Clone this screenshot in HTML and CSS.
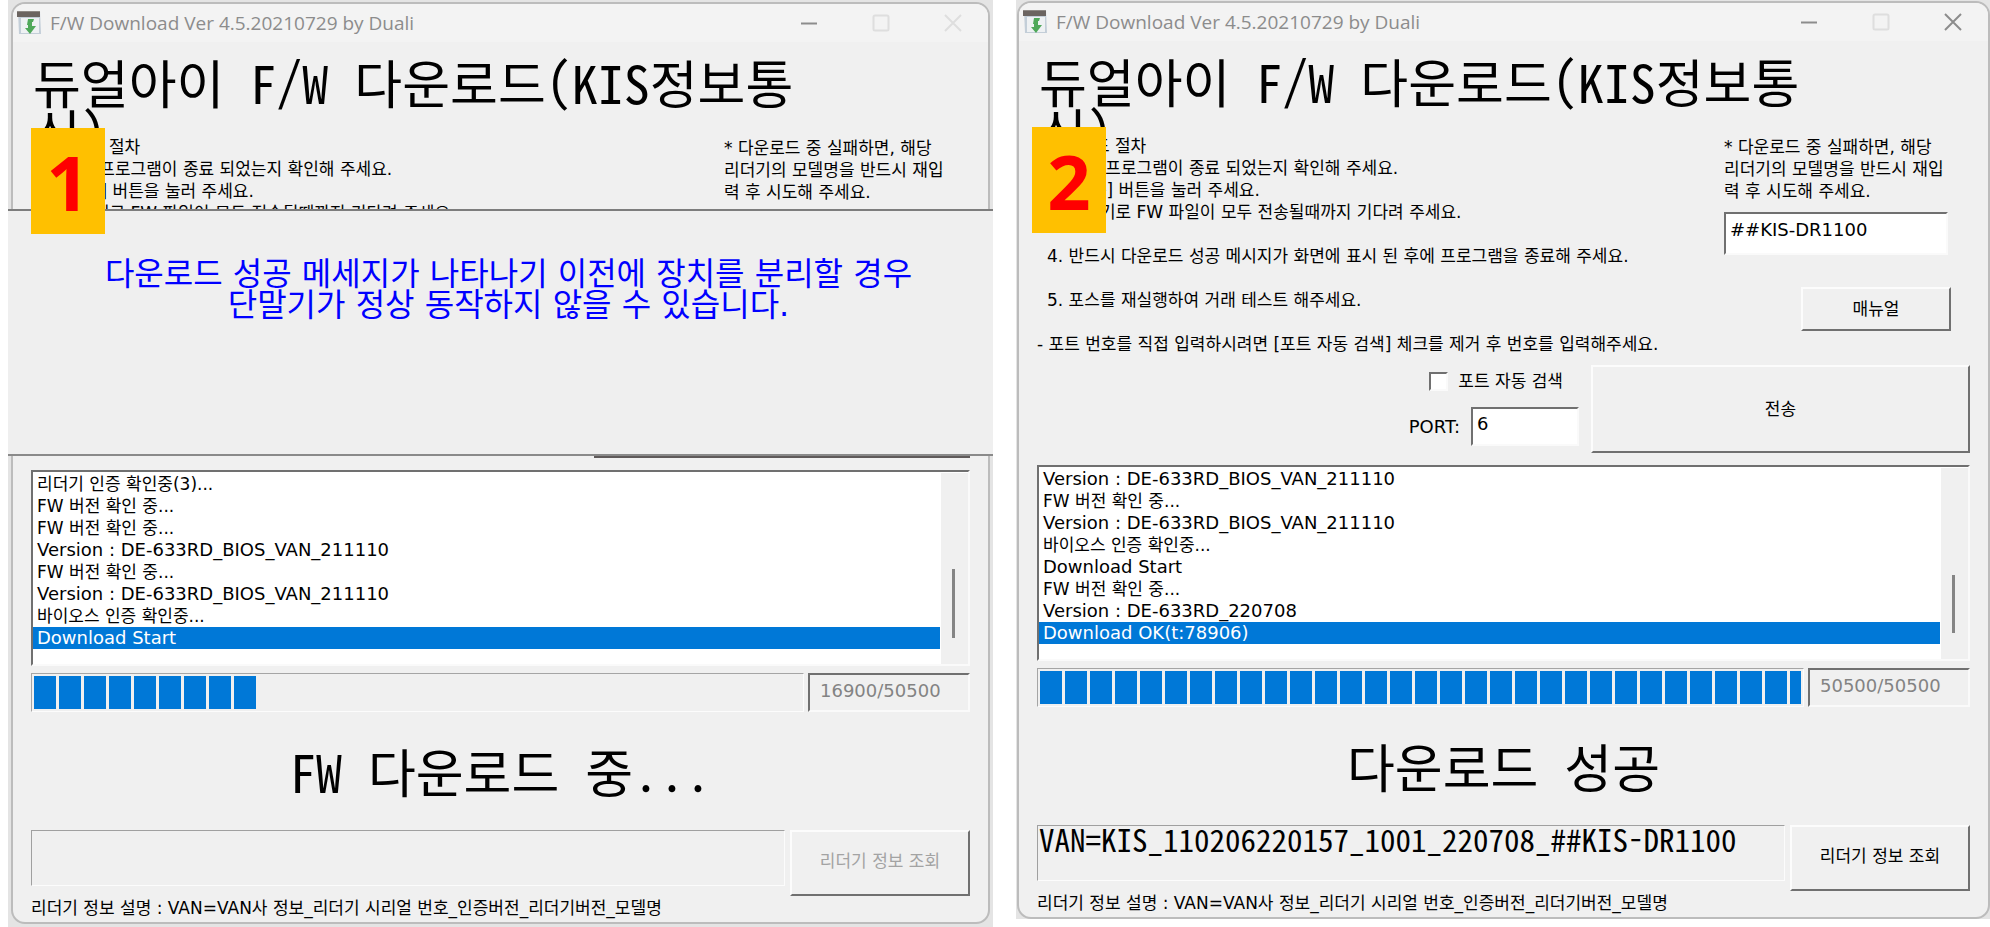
FILE: index.html
```
<!DOCTYPE html>
<html lang="ko">
<head>
<meta charset="utf-8">
<title>F/W Download Ver 4.5.20210729 by Duali</title>
<link rel="stylesheet" href="styles.css">
</head>
<body>
<main class="desk">
  <section class="pane pane-progress">
    <div class="window">
      <header class="titlebar">
        <svg class="app-icon" viewBox="0 0 24 26" aria-hidden="true">
          <path fill="#c3ced8" d="M1 1h22l1 23H2z"/>
          <path fill="#eef1f3" d="M4 8h18v15H4z"/>
          <path fill="#6b6460" d="M0 1h23v6H0z"/>
          <path fill="#8d8884" d="M0 1h23v1H0z"/>
          <path fill="#4fa85a" d="M11 9h6l-1 3h-1v4h4l-6 8-5-6h3v-3h-1z"/>
        </svg>
        <span class="caption">F/W Download Ver 4.5.20210729 by Duali</span>
        <button class="win-btn" aria-label="최소화"><svg viewBox="0 0 18 18"><path class="on" d="M1 9.500h16"/></svg></button>
        <button class="win-btn" aria-label="최대화" disabled><svg viewBox="0 0 18 18"><rect class="off" x="1.500" y="1.500" width="15" height="15" rx="1.500"/></svg></button>
        <button class="win-btn" aria-label="닫기" disabled><svg viewBox="0 0 18 18"><path class="off" d="M1 1l16 16M17 1L1 17"/></svg></button>
      </header>
      <div class="body">
        <h1 class="headline">듀얼아이 F/W 다운로드(KIS정보통신)</h1>
        <div class="intro intro-cut">
          <div class="guide">
            <p class="step">다운로드 절차</p>
            <p class="step">1. 포스 프로그램이 종료 되었는지 확인해 주세요.</p>
            <p class="step">2. [전송] 버튼을 눌러 주세요.</p>
            <p class="step">3. 리더기로 FW 파일이 모두 전송될때까지 기다려 주세요.</p>
          </div>
          <div class="side">
            <p class="note">* 다운로드 중 실패하면, 해당<br>리더기의 모델명을 반드시 재입<br>력 후 시도해 주세요.</p>
          </div>
        </div>
        <div class="notice" role="alert">다운로드 성공 메세지가 나타나기 이전에 장치를 분리할 경우<br>단말기가 정상 동작하지 않을 수 있습니다.</div>
        <div class="send-edge"></div>
        <div class="log">
          <ul class="rows">
            <li class="ko">리더기 인증 확인중(3)...</li>
            <li class="ko">FW 버전 확인 중...</li>
            <li class="ko">FW 버전 확인 중...</li>
            <li>Version : DE-633RD_BIOS_VAN_211110</li>
            <li class="ko">FW 버전 확인 중...</li>
            <li>Version : DE-633RD_BIOS_VAN_211110</li>
            <li class="ko">바이오스 인증 확인중...</li>
            <li class="selected">Download Start</li>
          </ul>
          <div class="scroll"><div class="thumb"></div></div>
        </div>
        <div class="progress-row">
          <progress class="bar" value="225" max="768" aria-label="진행률"></progress>
          <input class="count" value="16900/50500" aria-label="전송량" disabled>
        </div>
        <p class="status">FW 다운로드 중...</p>
        <div class="info-row">
          <input class="info" value="" aria-label="리더기 정보" readonly>
          <button class="btn query" disabled>리더기 정보 조회</button>
        </div>
        <p class="foot">리더기 정보 설명 : VAN=VAN사 정보_리더기 시리얼 번호_인증버전_리더기버전_모델명</p>
      </div>
    </div>
    <strong class="badge">1</strong>
  </section>

  <section class="pane pane-done">
    <div class="window">
      <header class="titlebar">
        <svg class="app-icon" viewBox="0 0 24 26" aria-hidden="true">
          <path fill="#c3ced8" d="M1 1h22l1 23H2z"/>
          <path fill="#eef1f3" d="M4 8h18v15H4z"/>
          <path fill="#6b6460" d="M0 1h23v6H0z"/>
          <path fill="#8d8884" d="M0 1h23v1H0z"/>
          <path fill="#4fa85a" d="M11 9h6l-1 3h-1v4h4l-6 8-5-6h3v-3h-1z"/>
        </svg>
        <span class="caption">F/W Download Ver 4.5.20210729 by Duali</span>
        <button class="win-btn" aria-label="최소화"><svg viewBox="0 0 18 18"><path class="on" d="M1 9.500h16"/></svg></button>
        <button class="win-btn" aria-label="최대화" disabled><svg viewBox="0 0 18 18"><rect class="off" x="1.500" y="1.500" width="15" height="15" rx="1.500"/></svg></button>
        <button class="win-btn" aria-label="닫기"><svg viewBox="0 0 18 18"><path class="on" d="M1 1l16 16M17 1L1 17"/></svg></button>
      </header>
      <div class="body">
        <h1 class="headline">듀얼아이 F/W 다운로드(KIS정보통신)</h1>
        <div class="intro">
          <div class="guide">
            <p class="step">다운로드 절차</p>
            <p class="step">1. 포스 프로그램이 종료 되었는지 확인해 주세요.</p>
            <p class="step">2. [전송] 버튼을 눌러 주세요.</p>
            <p class="step">3. 리더기로 FW 파일이 모두 전송될때까지 기다려 주세요.</p>
            <p class="step apart">4. 반드시 다운로드 성공 메시지가 화면에 표시 된 후에 프로그램을 종료해 주세요.</p>
            <p class="step apart">5. 포스를 재실행하여 거래 테스트 해주세요.</p>
            <p class="hint">- 포트 번호를 직접 입력하시려면 [포트 자동 검색] 체크를 제거 후 번호를 입력해주세요.</p>
          </div>
          <div class="side">
            <p class="note">* 다운로드 중 실패하면, 해당<br>리더기의 모델명을 반드시 재입<br>력 후 시도해 주세요.</p>
            <input class="model" value="##KIS-DR1100" aria-label="모델명">
            <button class="btn manual">매뉴얼</button>
          </div>
        </div>
        <div class="send-row">
          <div class="port-box">
            <label class="auto"><input type="checkbox" class="check">포트 자동 검색</label>
            <div class="port"><label for="port">PORT:</label><input id="port" class="port-no" value="6"></div>
          </div>
          <button class="btn send">전송</button>
        </div>
        <div class="log">
          <ul class="rows">
            <li>Version : DE-633RD_BIOS_VAN_211110</li>
            <li class="ko">FW 버전 확인 중...</li>
            <li>Version : DE-633RD_BIOS_VAN_211110</li>
            <li class="ko">바이오스 인증 확인중...</li>
            <li>Download Start</li>
            <li class="ko">FW 버전 확인 중...</li>
            <li>Version : DE-633RD_220708</li>
            <li class="selected">Download OK(t:78906)</li>
          </ul>
          <div class="scroll"><div class="thumb"></div></div>
        </div>
        <div class="progress-row">
          <progress class="bar" value="50500" max="50500" aria-label="진행률"></progress>
          <input class="count" value="50500/50500" aria-label="전송량" disabled>
        </div>
        <p class="status">다운로드 성공</p>
        <div class="info-row">
          <input class="info" value="VAN=KIS_110206220157_1001_220708_##KIS-DR1100" aria-label="리더기 정보" readonly>
          <button class="btn query">리더기 정보 조회</button>
        </div>
        <p class="foot">리더기 정보 설명 : VAN=VAN사 정보_리더기 시리얼 번호_인증버전_리더기버전_모델명</p>
      </div>
    </div>
    <strong class="badge">2</strong>
  </section>
</main>
</body>
</html>
```

FILE: styles.css
```
* { box-sizing: border-box; }

body {
  margin: 0;
  background: #fff;
  color: #000;
  font: 17px/22px "DejaVu Sans", "Noto Sans CJK KR", sans-serif;
}

h1, p, ul { margin: 0; padding: 0; font-weight: 400; }
ul { list-style: none; }
input, button { font: inherit; color: inherit; border-radius: 0; margin: 0; min-width: 0; }

.desk {
  display: grid;
  grid-template-columns: 985fr 974fr;
  gap: 23px;
  align-items: start;
  padding-left: 8px;
}

.pane { position: relative; background: #e4e4e4; }
.pane-progress { padding: 2px 3px 3px; }
.pane-done { padding: 1px 0 0 1px; }

.window {
  background: #f0f0f0;
  border: 2px solid #bcbcbc;
  border-radius: 14px;
}

.titlebar {
  display: flex;
  align-items: center;
  height: 38px;
  padding: 0 26px 0 4px;
  background: #f3f3f3;
  border-radius: 12px 12px 0 0;
  color: #8c8c8c;
}
.app-icon { width: 24px; height: 26px; margin-right: 9px; }
.caption { flex: 1; font: 19px/24px "Open Sans", sans-serif; }
.win-btn { width: 18px; height: 18px; padding: 0; border: 0; background: none; margin-left: 54px; }
.win-btn svg { display: block; width: 18px; height: 18px; fill: none; }
.on { stroke: #8c8c8c; stroke-width: 2; }
.off { stroke: #dedede; stroke-width: 2; }

.body { padding: 0 18px 3px; }

.headline {
  height: 79px;
  margin-top: 15px;
  padding: 0 150px 0 2px;
  overflow: hidden;
  word-break: break-all;
}
.headline, .status {
  font: 52px/50px "Noto Sans Mono CJK KR", "Liberation Mono", "Noto Sans CJK KR", monospace;
}

.intro { display: flex; align-items: flex-start; white-space: nowrap; }
.intro-cut { height: 73px; overflow: hidden; }
.guide { flex: 1; min-width: 0; }
.step { padding-left: 10px; }
.apart { margin-top: 22px; }
.hint { margin-top: 22px; }
.side { display: flex; flex-direction: column; width: 246px; padding-top: 1px; }

.notice {
  height: 247px;
  margin: 0 -23px;
  padding: 48px 0 0 16px;
  background: #efefef;
  border-top: 2px solid #7d7d7d;
  border-bottom: 2px solid #8a8a8a;
  color: #00f;
  font-size: 32px;
  line-height: 31px;
  text-align: center;
}
.send-edge { height: 2px; margin: 0 0 12px 60%; background: #5f5a5a; }

.model, .port-no, .count, .log {
  border: 2px solid;
  border-color: #707070 #fafafa #fafafa #707070;
  background: #fff;
}
.model { width: 224px; height: 43px; margin-top: 10px; padding: 0 4px 8px; font-size: 18px; }

.btn {
  background: #f0f0f0;
  border: 2px solid;
  border-color: #fcfcfc #707070 #707070 #fcfcfc;
  padding: 0;
}
.manual { width: 150px; height: 44px; margin: 32px 0 0 77px; }

.send-row { display: flex; justify-content: flex-end; gap: 12px; margin-top: 10px; }
.port-box { display: flex; flex-direction: column; align-items: flex-end; }
.auto { display: flex; align-items: center; gap: 10px; height: 32px; margin-right: 16px; }
.check {
  appearance: none;
  width: 19px;
  height: 19px;
  background: #fff;
  border: 2px solid;
  border-color: #707070 #fafafa #fafafa #707070;
}
.port { display: flex; align-items: center; gap: 11px; margin-top: 10px; font-size: 18px; }
.port-no { width: 108px; height: 39px; padding: 0 4px 6px; }
.send { width: 379px; height: 88px; }

.log { display: flex; height: 196px; padding-top: 1px; }
.pane-done .log { margin-top: 12px; }
.rows { flex: 1; margin-right: 1px; font-size: 18px; }
.rows li { height: 22px; padding-left: 4px; }
.rows .ko { font-size: 17px; }
.rows .selected { background: #0078d7; color: #fff; }
.scroll { width: 27px; background: #f0f0f0; padding: 96px 0 0 11px; }
.pane-done .scroll { padding-top: 107px; }
.thumb { width: 3px; height: 69px; background: #858585; }
.pane-done .thumb { height: 58px; }

.progress-row { display: flex; gap: 4px; margin-top: 7px; }
.bar {
  appearance: none;
  flex: 1;
  min-width: 0;
  height: 39px;
  padding: 2px;
  background: #f0f0f0;
  border: 1px solid;
  border-color: #a5a5a5 #fcfcfc #fcfcfc #a5a5a5;
}
.bar::-webkit-progress-bar { background: transparent; }
.bar::-webkit-progress-value {
  background: repeating-linear-gradient(90deg, #0078d7 0 22px, transparent 22px 25px);
}
.count {
  width: 162px;
  height: 39px;
  padding: 0 10px 4px;
  background: #f0f0f0;
  color: #838383;
  font-size: 18px;
}

.status { margin-top: 34px; text-align: center; }

.info-row { display: flex; align-items: flex-start; gap: 5px; margin-top: 34px; }
.info {
  flex: 1;
  height: 56px;
  padding: 0 1px 30px;
  background: #f0f0f0;
  border: 1px solid;
  border-color: #a0a0a0 #fcfcfc #fcfcfc #a0a0a0;
  font: 31px/24px "Noto Sans Mono CJK KR", "Liberation Mono", monospace;
}
.query { width: 180px; height: 66px; padding-bottom: 4px; }
.query:disabled { color: #a3a3a3; }
.foot { white-space: nowrap; margin-top: 1px; }

.badge {
  position: absolute;
  left: 23px;
  top: 128px;
  width: 74px;
  height: 106px;
  background: #ffc000;
  color: #f00;
  font: 700 76px/108px "Open Sans", sans-serif;
  text-align: center;
}
.pane-done .badge { left: 16px; top: 127px; }
```
